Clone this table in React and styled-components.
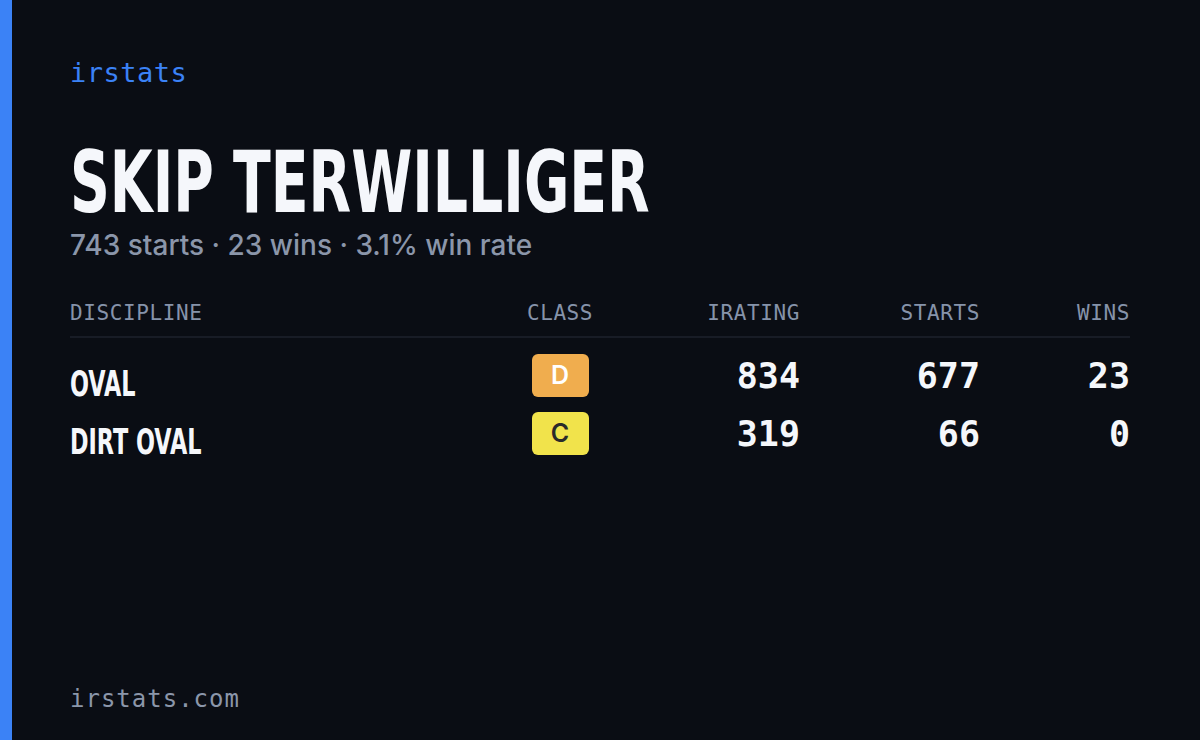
import styled, { createGlobalStyle } from "styled-components"

const Global = createGlobalStyle`
    html, body {
        margin: 0;
        padding: 0;
        background: #0a0d14;
    }
`

const mono = `"DejaVu Sans Mono", "Liberation Mono", monospace`
const display = `"DejaVu Sans", "Liberation Sans", sans-serif`

const Card = styled.div`
    display: flex;
    width: 1200px;
    height: 740px;
    background: #0a0d14;
    overflow: hidden;
`

const Stripe = styled.div`
    width: 12px;
    flex-shrink: 0;
    background: #3b82f6;
`

const Main = styled.div`
    flex: 1;
    display: flex;
    flex-direction: column;
    padding: 56px 70px 26px 58px;
`

const Brand = styled.div`
    font-family: ${mono};
    font-size: 27px;
    letter-spacing: 0.5px;
    color: #3b82f6;
    line-height: 34px;
`

const Name = styled.h1`
    margin: 56px 0 0;
    font-family: ${display};
    font-stretch: condensed;
    font-weight: 700;
    font-size: 86px;
    line-height: 72px;
    color: #f5f7fb;
    white-space: nowrap;
    transform: scaleX(0.715);
    transform-origin: left center;
`

const Summary = styled.div`
    margin-top: 9px;
    font-family: Inter, "Noto Sans", sans-serif;
    font-weight: 500;
    font-size: 28px;
    line-height: 36px;
    color: #8b96aa;
`

const Table = styled.div`
    margin-top: 37px;
    display: grid;
    grid-template-columns: 1fr 120px 180px 180px 150px;
`

const Head = styled.div`
    font-family: ${mono};
    font-size: 21px;
    letter-spacing: 0.6px;
    color: #8693aa;
    line-height: 26px;
    padding-bottom: 10px;
    margin-bottom: 8px;
    border-bottom: 2px solid #181c26;
    text-align: ${(p) => p.align || "left"};
`

const Discipline = styled.div`
    font-family: ${display};
    font-stretch: condensed;
    font-weight: 700;
    font-size: 36px;
    color: #f5f7fb;
    display: flex;
    align-items: flex-end;
    height: 58px;
    transform: scaleX(0.69);
    transform-origin: left center;
    white-space: nowrap;
`

const ClassCell = styled.div`
    display: flex;
    justify-content: center;
    align-items: center;
    height: 58px;
`

const Badge = styled.div`
    width: 57px;
    height: 43px;
    border-radius: 6px;
    background: ${(p) => p.bg};
    color: ${(p) => p.fg};
    display: flex;
    align-items: center;
    justify-content: center;
    font-family: Inter, "Noto Sans", sans-serif;
    font-weight: 600;
    font-size: 25px;
`

const Num = styled.div`
    font-family: ${mono};
    font-weight: 700;
    font-size: 35px;
    color: #f5f7fb;
    height: 58px;
    padding-top: 2px;
    box-sizing: border-box;
    display: flex;
    align-items: center;
    justify-content: flex-end;
`

const Footer = styled.div`
    margin-top: auto;
    font-family: ${mono};
    font-size: 24px;
    letter-spacing: 1px;
    color: #8b96aa;
    line-height: 30px;
`

const classes = {
    D: { bg: "#f0ad4e", fg: "#ffffff" },
    C: { bg: "#f1e34b", fg: "#2a2a2a" },
}

const rows = [
    { name: "OVAL", cls: "D", irating: 834, starts: 677, wins: 23 },
    { name: "DIRT OVAL", cls: "C", irating: 319, starts: 66, wins: 0 },
]

export default function App() {
    return (
        <Card>
            <Global />
            <Stripe />
            <Main>
                <Brand>irstats</Brand>
                <Name>SKIP TERWILLIGER</Name>
                <Summary>743 starts · 23 wins · 3.1% win rate</Summary>
                <Table>
                    <Head>DISCIPLINE</Head>
                    <Head align="center">CLASS</Head>
                    <Head align="right">IRATING</Head>
                    <Head align="right">STARTS</Head>
                    <Head align="right">WINS</Head>
                    {rows.map((r) => [
                        <Discipline key={r.name + "n"}>{r.name}</Discipline>,
                        <ClassCell key={r.name + "c"}>
                            <Badge bg={classes[r.cls].bg} fg={classes[r.cls].fg}>{r.cls}</Badge>
                        </ClassCell>,
                        <Num key={r.name + "i"}>{r.irating}</Num>,
                        <Num key={r.name + "s"}>{r.starts}</Num>,
                        <Num key={r.name + "w"}>{r.wins}</Num>,
                    ])}
                </Table>
                <Footer>irstats.com</Footer>
            </Main>
        </Card>
    )
}
